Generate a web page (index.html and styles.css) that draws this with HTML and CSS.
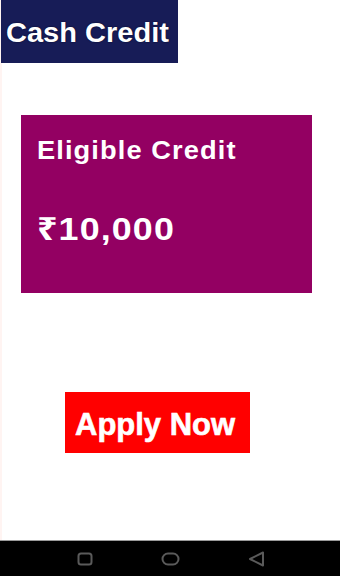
FILE: index.html
```html
<!DOCTYPE html>
<html lang="en">
<head>
<meta charset="utf-8">
<title>Cash Credit</title>
<link rel="stylesheet" href="styles.css">
</head>
<body>
<div class="screen">
  <main class="content">
    <header class="title-box"><span class="title-text">Cash Credit</span></header>
    <section class="credit-card">
      <div class="credit-label">Eligible Credit</div>
      <div class="credit-amount">₹10,000</div>
    </section>
    <button class="apply-btn" type="button"><span class="apply-text">Apply Now</span></button>
  </main>
  <nav class="nav-bar">
    <svg class="nav-icon" width="16" height="14" viewBox="0 0 16 14"><rect x="1.5" y="1.5" width="13" height="11" rx="2.5" fill="none" stroke="#5a5a5a" stroke-width="2"/></svg>
    <svg class="nav-icon" width="19" height="14" viewBox="0 0 19 14"><rect x="1.5" y="1.5" width="16" height="11" rx="5.5" fill="none" stroke="#5a5a5a" stroke-width="2"/></svg>
    <svg class="nav-icon" width="17" height="16" viewBox="0 0 17 16"><path d="M2 8 L15 1.5 L15 14.5 Z" fill="none" stroke="#5a5a5a" stroke-width="2" stroke-linejoin="round"/></svg>
  </nav>
</div>
</body>
</html>
```

FILE: styles.css
```css
html, body {
  margin: 0;
  padding: 0;
  background: #ffffff;
}

body {
  font-family: "Liberation Sans", "Noto Sans", "DejaVu Sans", sans-serif;
}

.screen {
  width: 340px;
  height: 576px;
  display: flex;
  flex-direction: column;
  overflow: hidden;
}

.content {
  flex: 1;
  display: flex;
  flex-direction: column;
  align-items: flex-start;
  border-left: 2px solid #fff4f2;
}

.title-box {
  box-sizing: border-box;
  width: 177px;
  height: 63px;
  margin-left: -1px;
  padding: 20px 0 0 5px;
  background: #171c57;
  color: #ffffff;
  font-weight: bold;
  font-size: 27px;
  line-height: 27px;
  white-space: nowrap;
  text-shadow: 0 0 1.5px #05071f;
}

.title-text {
  display: inline-block;
  transform: scaleX(1.075);
  transform-origin: left center;
}

.credit-card {
  box-sizing: border-box;
  width: 291px;
  height: 178px;
  margin: 52px 0 0 19px;
  padding: 23px 0 0 16px;
  background: #930062;
  color: #ffffff;
  font-weight: bold;
}

.credit-label {
  font-size: 25px;
  line-height: 25px;
  letter-spacing: 1px;
  white-space: nowrap;
  transform: scaleX(1.09);
  transform-origin: left center;
}

.credit-amount {
  margin-top: 50px;
  font-size: 32px;
  line-height: 32px;
  letter-spacing: 1px;
  white-space: nowrap;
  transform: scaleX(1.12);
  transform-origin: left center;
}

.apply-btn {
  box-sizing: border-box;
  width: 185px;
  height: 61px;
  margin: 99px 0 0 63px;
  padding: 3px 0 0 10px;
  border: none;
  background: #ff0000;
  color: #ffffff;
  font-family: "Liberation Sans", "DejaVu Sans", sans-serif;
  font-weight: bold;
  font-size: 31px;
  line-height: 31px;
  text-align: left;
  white-space: nowrap;
}

.apply-text {
  display: inline-block;
  -webkit-text-stroke: 0.6px #ffffff;
}

.nav-bar {
  height: 35px;
  border-top: 1px solid #9a9a9a;
  background: #000000;
  display: flex;
  align-items: center;
  padding-left: 77px;
  gap: 68px;
}

.nav-icon {
  display: block;
}
```
